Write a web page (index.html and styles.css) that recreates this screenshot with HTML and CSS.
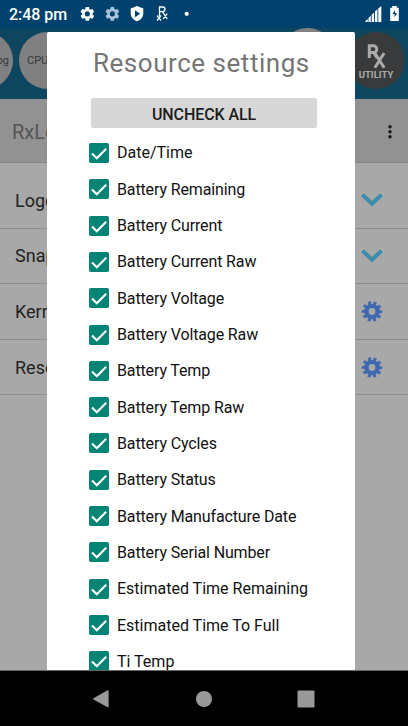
FILE: index.html
```html
<!DOCTYPE html>
<html lang="en">
<head>
<meta charset="utf-8">
<title>Resource settings</title>
<link rel="stylesheet" href="styles.css">
</head>
<body>
<svg class="defs" width="0" height="0">
  <defs>
    <path id="gear" d="M19.14 12.94c.04-.3.06-.61.06-.94 0-.32-.02-.64-.07-.94l2.03-1.58c.18-.14.23-.41.12-.61l-1.92-3.32c-.12-.22-.37-.29-.59-.22l-2.39.96c-.5-.38-1.03-.7-1.62-.94l-.36-2.54c-.04-.24-.24-.41-.48-.41h-3.84c-.24 0-.43.17-.47.41l-.36 2.54c-.59.24-1.13.57-1.62.94l-2.39-.96c-.22-.08-.47 0-.59.22L2.74 8.87c-.12.21-.08.47.12.61l2.03 1.58c-.05.3-.09.63-.09.94s.02.64.07.94l-2.03 1.58c-.18.14-.23.41-.12.61l1.92 3.32c.12.22.37.29.59.22l2.39-.96c.5.38 1.03.7 1.62.94l.36 2.54c.05.24.24.41.48.41h3.84c.24 0 .44-.17.47-.41l.36-2.54c.59-.24 1.13-.56 1.62-.94l2.39.96c.22.08.47 0 .59-.22l1.92-3.32c.12-.22.07-.47-.12-.61l-2.01-1.58zM12 15.6A3.6 3.6 0 1 1 12 8.4a3.6 3.6 0 0 1 0 7.2z"/>
    <g id="cog" fill="none" stroke="#3d67ae">
      <circle cx="11" cy="11.500" r="5.600" stroke-width="4.400"/>
      <circle cx="11" cy="11.500" r="8.600" stroke-width="3.200" stroke-dasharray="2.900 2.504" stroke-dashoffset="1.450"/>
    </g>
    <g id="checked">
      <rect width="20" height="20" rx="1.8" fill="#048474"/>
      <path d="M3 10.6 7.8 15.2 17.2 5.7" fill="none" stroke="#fff" stroke-width="2.1"/>
    </g>
  </defs>
</svg>
<div class="screen">
  <header class="status">
    <span class="clock">2:48 pm</span>
    <svg class="status-icons" width="110" height="28" viewBox="80 0 110 28">
      <use href="#gear" transform="translate(78.700 5.200) scale(.72)" fill="#fff"/>
      <use href="#gear" transform="translate(103.700 5.200) scale(.72)" fill="#a9c4da"/>
      <path d="M137 6l6.300 2.500v4.800c0 3.700-2.600 6.800-6.300 8-3.700-1.200-6.300-4.300-6.300-8V8.500z" fill="#fff"/>
      <path d="M135 10.200v7l5.200-3.500z" fill="#00426d"/>
      <path d="M159.500 16V7h3.200a2.200 2.200 0 0 1 0 4.600h-3.200m3 0 4.700 7.200m0-5.200-4 5.200M157 15.500l4 5m0-5-4 5" fill="none" stroke="#fff" stroke-width="1.300"/>
      <circle cx="186.700" cy="13.800" r="2.100" fill="#fff"/>
    </svg>
    <svg class="signal" width="38" height="28" viewBox="362 0 38 28" fill="#fff">
      <path d="M365.500 22v-1l2.200-2v3zM368.500 22v-4l2.300-2.300V22zM371.700 22v-7.200l2.400-2.300V22zM375 22V11.500l2.400-2.300V22zM378.300 22V8.500l3-2.500v16z"/>
      <path d="M392.200 6h4.600v1.700h2V21h-8.600V7.700h2z"/>
      <path d="M395 10l-2.500 4h2v3.500l2.600-4.500h-2z" fill="#00426d"/>
    </svg>
  </header>
  <nav class="tabs">
    <span class="tab tab-log">RxLog</span>
    <span class="tab tab-cpu">CPU</span>
    <span class="tab tab-top"></span>
    <span class="tab logo">
      <svg width="50" height="57" viewBox="0 0 50 57">
        <circle cx="25" cy="28.500" r="28.500" fill="#393a3b"/>
        <g fill="none" stroke="#aaa" stroke-width="3"><path d="M18.300 26V13.700h4a3.400 3.400 0 0 1 0 6.900h-4m4.500 0 3.400 5.400M23.800 21l9.400 14.800M33.200 21l-9.400 14.800"/></g>
      </svg>
      <b>UTILITY</b>
    </span>
  </nav>
  <div class="toolbar"><span>RxLogger</span>
    <svg width="6" height="16" viewBox="0 0 6 16" fill="#151515"><circle cx="3" cy="2.700" r="1.700"/><circle cx="3" cy="7.700" r="1.700"/><circle cx="3" cy="12.700" r="1.700"/></svg>
  </div>
  <main class="list">
    <div class="row"><span>Logging</span><svg width="22" height="22" viewBox="0 0 22 22"><path d="M1.500 5.700 11 14.700 20.500 5.700" fill="none" stroke="#3d8bad" stroke-width="4"/></svg></div>
    <div class="row"><span>Snapshot</span><svg width="22" height="22" viewBox="0 0 22 22"><path d="M1.500 5.700 11 14.700 20.500 5.700" fill="none" stroke="#3d8bad" stroke-width="4"/></svg></div>
    <div class="row"><span>Kernel</span><svg width="22" height="22" viewBox="0 0 22 22"><use href="#cog"/></svg></div>
    <div class="row"><span>Resource</span><svg width="22" height="22" viewBox="0 0 22 22"><use href="#cog"/></svg></div>
  </main>
  <footer class="navbar">
    <svg width="18" height="20" viewBox="0 0 18 20"><path d="M1.500 9.200 15.600 1.200q1-.4 1 .5v16q0 .9-1 .5L1.500 10.400q-1-.6 0-1.200z" fill="#999"/></svg>
    <svg width="18" height="18" viewBox="0 0 18 18"><circle cx="9" cy="9" r="8" fill="#999"/></svg>
    <svg width="18" height="18" viewBox="0 0 18 18"><rect x=".5" y=".5" width="17" height="17" rx="1" fill="#999"/></svg>
  </footer>
  <section class="dialog">
    <h1>Resource settings</h1>
    <button>UNCHECK ALL</button>
    <ul>
      <li><svg><use href="#checked"/></svg><span>Date/Time</span></li>
      <li class="battery"><svg><use href="#checked"/></svg><span>Battery Remaining</span></li>
      <li class="battery"><svg><use href="#checked"/></svg><span>Battery Current</span></li>
      <li class="battery"><svg><use href="#checked"/></svg><span>Battery Current Raw</span></li>
      <li class="battery"><svg><use href="#checked"/></svg><span>Battery Voltage</span></li>
      <li class="battery"><svg><use href="#checked"/></svg><span>Battery Voltage Raw</span></li>
      <li class="battery"><svg><use href="#checked"/></svg><span>Battery Temp</span></li>
      <li class="battery"><svg><use href="#checked"/></svg><span>Battery Temp Raw</span></li>
      <li class="battery"><svg><use href="#checked"/></svg><span>Battery Cycles</span></li>
      <li class="battery"><svg><use href="#checked"/></svg><span>Battery Status</span></li>
      <li class="battery"><svg><use href="#checked"/></svg><span>Battery Manufacture Date</span></li>
      <li class="battery"><svg><use href="#checked"/></svg><span>Battery Serial Number</span></li>
      <li><svg><use href="#checked"/></svg><span>Estimated Time Remaining</span></li>
      <li><svg><use href="#checked"/></svg><span>Estimated Time To Full</span></li>
      <li><svg><use href="#checked"/></svg><span>Ti Temp</span></li>
    </ul>
  </section>
</div>
</body>
</html>
```
FILE: styles.css
```css
* { box-sizing: border-box; }
body { margin: 0; font-family: Roboto, "Liberation Sans", sans-serif; }
svg { display: block; flex: none; }
.defs { position: absolute; }
.screen { position: relative; width: 408px; height: 726px; overflow: hidden; display: flex; flex-direction: column; background: #a8a8a8; }
.status { height: 28px; flex: none; display: flex; align-items: center; background: #00426d; color: #fff; padding: 0 8px 0 9px; }
.clock { width: 71px; padding-top: 1px; font-size: 16px; font-weight: 500; line-height: 28px; letter-spacing: -.050px; white-space: nowrap; }
.signal { margin-left: auto; }
.tabs { position: relative; height: 71px; flex: none; background: #0f465f; overflow: hidden; }
.tab { position: absolute; top: 4px; width: 57px; height: 57px; border-radius: 50%; background: #808080; color: #383838; font-size: 11px; line-height: 58px; text-align: center; }
.tab-log { left: -44px; padding-right: 4px; text-align: right; }
.tab-cpu { left: 19px; padding-left: 8px; text-align: left; }
.tab-top { left: 279px; top: 0; }
.logo { left: 351px; width: 50px; background: none; }
.logo svg { overflow: visible; }
.logo b { position: absolute; left: 0; right: 0; top: 37px; color: #aaa; font-size: 9.500px; line-height: 12px; font-weight: 700; }
.toolbar { height: 64px; flex: none; display: flex; align-items: center; justify-content: space-between; padding: 3px 15px 0 12px; background: #929292; border-bottom: 1px solid #858585; color: #555; font-size: 20px; }
.list { flex: 1; padding-top: 10px; border-bottom: 1px solid #666; }
.row { height: 55.600px; display: flex; align-items: center; justify-content: space-between; padding: 0 25px 0 15px; border-bottom: 1px solid #8e8e8e; font-size: 18px; color: #222; }
.navbar { height: 55px; flex: none; background: #000; display: flex; align-items: center; justify-content: space-between; padding: 0 93px 0 92px; }
.dialog { position: absolute; left: 47px; top: 32px; width: 308px; height: 638px; background: #fff; border-radius: 2px 2px 0 0; overflow: hidden; padding: 0 38px 0 42px; }
h1 { margin: 0 -10px 0 4px; padding-top: 14px; height: 66px; font-size: 26px; line-height: 34px; font-weight: 400; letter-spacing: .530px; color: #757575; white-space: nowrap; }
button { display: block; width: 226px; height: 30px; margin-left: 2px; padding: 2px 0 0; border: 0; border-radius: 2px; background: #d6d7d6; color: #1c1c1c; font: 500 16px Roboto, sans-serif; letter-spacing: -.100px; }
ul { list-style: none; margin: 6.800px 0 0; padding: 0; }
li { height: 36.320px; display: flex; align-items: center; gap: 8px; font-size: 16px; color: #111; white-space: nowrap; }
li svg { width: 20px; height: 20px; }
.battery { letter-spacing: -.130px; }
```
